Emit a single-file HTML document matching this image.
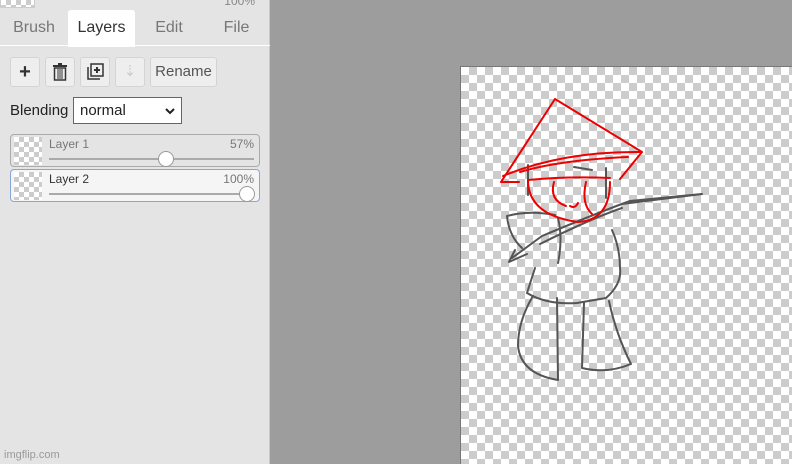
<!DOCTYPE html>
<html><head><style>
*{margin:0;padding:0;box-sizing:border-box}
body{width:792px;height:464px;overflow:hidden;background:#9d9d9d;font-family:"Liberation Sans",sans-serif;position:relative}
#panel{position:absolute;left:0;top:0;width:270px;height:464px;background:#e4e4e4;border-right:1px solid #c8c8c8}
.tabs{position:absolute;top:10px;left:0;width:270px;height:36px;border-bottom:1px solid #fff}
.tab{position:absolute;top:0;height:36px;line-height:36px;font-size:16px;color:#777;text-align:center}
.btn{position:absolute;top:57px;height:30px;background:#eee;border:1px solid #d4d4d4;border-radius:3px;font-size:15px;color:#555;text-align:center;line-height:28px}
.layer{position:absolute;left:10px;width:250px;height:33px;border:1px solid #aaa;border-radius:4px}
.chk{background-color:#fff;background-image:linear-gradient(45deg,#ccc 25%,transparent 25%,transparent 75%,#ccc 75%),linear-gradient(45deg,#ccc 25%,transparent 25%,transparent 75%,#ccc 75%);background-size:10px 10px;background-position:0 0,5px 5px}
.thumb{position:absolute;left:3px;top:2px;width:28px;height:28px}
.lname{position:absolute;left:38px;top:2px;font-size:12px;color:#777}
.pct{position:absolute;right:5px;top:2px;font-size:12px;color:#777}
.track{position:absolute;left:38px;right:5px;top:23px;height:2px;background:#aaa}
.knob{position:absolute;top:16px;width:16px;height:16px;border-radius:50%;background:#fff;border:1px solid #999}
#canvas{position:absolute;left:460px;top:66px;width:332px;height:398px;border-left:1px solid #777;border-top:1px solid #777;background-color:#fff;background-image:linear-gradient(45deg,#ccc 25%,transparent 25%,transparent 75%,#ccc 75%),linear-gradient(45deg,#ccc 25%,transparent 25%,transparent 75%,#ccc 75%);background-size:16px 16px;background-position:0 0,8px 8px}
</style></head><body>
<div id="panel">
<div class="chk" style="position:absolute;left:0;top:0;width:35px;height:8px;border:1px solid #ccc;border-top:none"></div>
<div style="position:absolute;right:14px;top:-6px;font-size:12px;color:#888">100%</div>
<div class="tabs">
<div class="tab" style="left:0;width:68px">Brush</div>
<div class="tab" style="left:68px;width:67px;background:#fff;color:#333;border-radius:3px 3px 0 0;height:37px">Layers</div>
<div class="tab" style="left:135px;width:68px">Edit</div>
<div class="tab" style="left:203px;width:67px">File</div>
</div>
<div class="btn" style="left:10px;width:30px;font-weight:bold;color:#333;font-size:20px">+</div>
<div class="btn" style="left:45px;width:30px"><svg width="14" height="18" viewBox="0 0 14 18" style="margin-top:5px"><rect x="0" y="2" width="14" height="2" fill="#333"/><rect x="5" y="0" width="4" height="2" fill="#333"/><rect x="1.5" y="5" width="11" height="12" fill="none" stroke="#333" stroke-width="1.5"/><path d="M5 6v10M7 6v10M9 6v10" stroke="#333"/></svg></div>
<div class="btn" style="left:80px;width:30px"><svg width="18" height="18" viewBox="0 0 18 18" style="margin-top:5px"><rect x="5" y="1" width="12" height="12" fill="none" stroke="#333" stroke-width="1.5"/><path d="M2 4v12h12" fill="none" stroke="#333" stroke-width="1.5"/><path d="M11 4v6M8 7h6" stroke="#333" stroke-width="2"/></svg></div>
<div class="btn" style="left:115px;width:30px;color:#ccc">⇣</div>
<div class="btn" style="left:150px;width:67px">Rename</div>
<div style="position:absolute;left:10px;top:102px;font-size:15px;color:#222">Blending</div>
<div style="position:absolute;left:73px;top:97px;width:109px;height:27px;background:#fff;border:1px solid #666;font-size:15px;color:#222;padding:4px 0 0 6px">normal<svg width="10" height="8" viewBox="0 0 10 8" style="position:absolute;right:6px;top:9px"><path d="M1 2l4 4 4-4" fill="none" stroke="#222" stroke-width="2"/></svg></div>
<div class="layer" style="top:134px"><div class="thumb chk"></div><div class="lname">Layer 1</div><div class="pct">57%</div><div class="track"></div><div class="knob" style="left:147px"></div></div>
<div class="layer" style="top:169px;background:#f5f5f5;border-color:#8aa6d8"><div class="thumb chk"></div><div class="lname" style="color:#333">Layer 2</div><div class="pct">100%</div><div class="track"></div><div class="knob" style="left:228px"></div></div>
<div style="position:absolute;left:4px;top:449px;font-size:11px;color:#999">imgflip.com</div>
</div>
<div id="canvas"></div>
<svg width="792" height="464" style="position:absolute;left:0;top:0" fill="none" stroke-linecap="round" stroke-linejoin="round">
<g stroke="#555" stroke-width="2">
<path d="M507 216q22-6 48 -1M507 216q2 20 15 32M515 250l-6 12 18-8"/>
<path d="M512 258l30-22q60-25 88-35l72-7-80 10M540 244q50-25 82-36"/>
<path d="M535 268l-8 25q20 12 50 10l29-5q16-14 14-30 0-20-8-38"/>
<path d="M533 296q-15 25-15 50 3 28 40 34l-1-82M584 303l-2 65q25 6 49-4-15-30-22-63"/>
<path d="M528 165v30M606 168v30M558 218q5 20 0 45M592 170l-18 -3"/>
</g>
<g stroke="#e00" stroke-width="2">
<path d="M555 99l-54 83h18M555 99l87 53-22 27M503 176q60-25 138-24M520 172q40-12 108-15"/>
<path d="M528 180q0 35 50 42 32-2 32-40M528 180q40-4 82-2"/>
<path d="M554 182q-5 18 12 24M586 182q-5 22 6 32M570 206q5 3 8-3"/>
</g>
</svg>
</body></html>
